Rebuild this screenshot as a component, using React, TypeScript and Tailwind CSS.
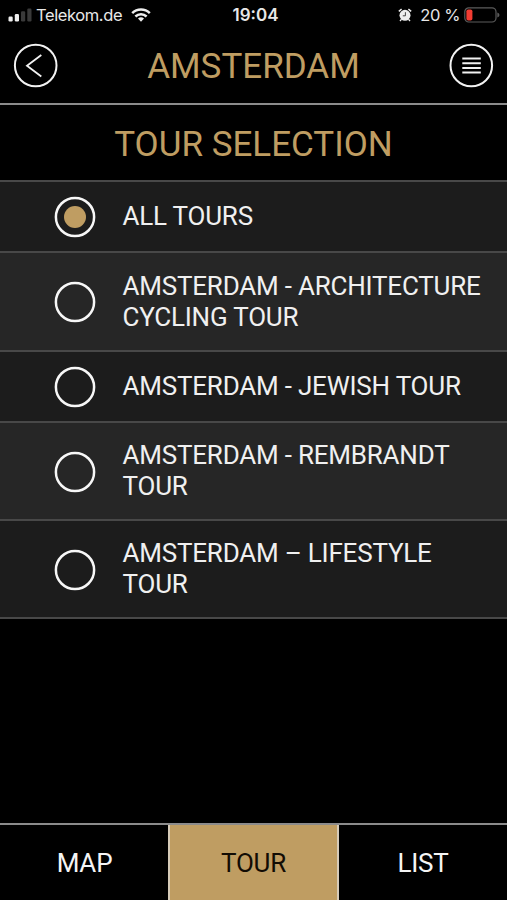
import React from "react";

const tours = [
  { lines: ["ALL TOURS"], row: "h-[71px] bg-[#1c1c1c]", selected: true },
  { lines: ["AMSTERDAM - ARCHITECTURE", "CYCLING TOUR"], row: "h-[99px] bg-[#262626]" },
  { lines: ["AMSTERDAM - JEWISH TOUR"], row: "h-[71px] bg-[#1c1c1c]" },
  { lines: ["AMSTERDAM - REMBRANDT", "TOUR"], row: "h-[98px] bg-[#262626]" },
  { lines: ["AMSTERDAM – LIFESTYLE", "TOUR"], row: "h-[98px] bg-[#1c1c1c]" },
];

function Signal() {
  return (
    <svg width="24" height="14" viewBox="0 0 24 14" fill="#eee">
      <rect x="0.5" y="8.5" width="4.2" height="5" rx="1.2" />
      <rect x="6.8" y="6" width="4.2" height="7.5" rx="1.2" />
      <rect x="13" y="3.3" width="4.2" height="10.2" rx="1.2" fill="#3a3a3a" />
      <rect x="19.3" y="0.5" width="4.2" height="13" rx="1.2" fill="#3a3a3a" />
    </svg>
  );
}

function Wifi() {
  return (
    <svg width="20" height="14" viewBox="0 0 20 14" fill="none" stroke="#eee" strokeWidth="2.5">
      <path d="M1.2 5.1a12.6 12.6 0 0 1 17.6 0" />
      <path d="M4.4 8.5a8 8 0 0 1 11.2 0" />
      <path d="M10 13.7l-3-3.1a4.3 4.3 0 0 1 6 0z" fill="#eee" stroke="none" />
    </svg>
  );
}

function Alarm() {
  return (
    <svg width="14" height="14" viewBox="0 0 14 14" fill="none">
      <circle cx="7" cy="7.3" r="5.5" fill="#eee" />
      <path d="M0.8 3.4L3.6 1.1M13.2 3.4L10.4 1.1M3.4 11.4L2 13M10.6 11.4L12 13" stroke="#eee" strokeWidth="1.4" />
      <path d="M7.4 4.2v3.6H4.8" stroke="#333" strokeWidth="0.9" />
    </svg>
  );
}

function Battery() {
  return (
    <svg width="36" height="16" viewBox="0 0 36 16" fill="none">
      <rect x="0.8" y="0.8" width="31.2" height="14.2" rx="4" stroke="#5c5c5c" strokeWidth="1.2" />
      <rect x="2.4" y="2.5" width="6" height="11" rx="1.8" fill="#f23c32" />
      <path d="M33.3 5.4q2.2.6 2.2 2.5t-2.2 2.5z" fill="#5c5c5c" />
    </svg>
  );
}

function Radio({ selected }: { selected?: boolean }) {
  return (
    <svg className="mt-px shrink-0" width="42" height="42" viewBox="0 0 42 42" fill="none">
      <circle cx="21" cy="21" r="19.1" stroke="#f7f7f7" strokeWidth="2.5" />
      {selected && <circle cx="21" cy="21" r="11" fill="#bf9d62" />}
    </svg>
  );
}

export default function App() {
  return (
    <div className="flex h-[900px] w-[507px] flex-col overflow-hidden bg-black font-['Roboto',sans-serif]">
      <div className="grid h-[29px] grid-cols-[1fr_auto_1fr] items-center text-[#e8e8e8] font-['Inter',sans-serif]">
        <div className="flex items-center pl-2">
          <Signal />
          <span className="ml-1 w-[87px] whitespace-nowrap text-[16.5px] leading-7 tracking-[-0.4px]">Telekom.de</span>
          <span className="ml-2"><Wifi /></span>
        </div>
        <div className="pl-1 text-[17px] font-semibold leading-7">19:04</div>
        <div className="flex items-center justify-end pr-[7px]">
          <Alarm />
          <span className="mx-1 ml-2 whitespace-nowrap text-[16.5px] leading-7 tracking-[-0.4px]">20 %</span>
          <Battery />
        </div>
      </div>

      <header className="flex h-[76px] items-start justify-between border-b-2 border-[#8b8b8b] px-[13px] pt-[14px]">
        <button aria-label="Back">
          <svg width="45" height="45" viewBox="0 0 45 45" fill="none" stroke="#f2f2f2">
            <circle cx="22.7" cy="22.5" r="20.8" strokeWidth="2" />
            <path d="M28.3 12L14 22.8L28.3 33.5" strokeWidth="1.8" />
          </svg>
        </button>
        <h1 className="text-[35px] leading-[47px] text-[#bf9d62]">AMSTERDAM</h1>
        <button aria-label="Menu">
          <svg width="45" height="45" viewBox="0 0 45 45" fill="none" stroke="#f2f2f2">
            <circle cx="22.3" cy="22.5" r="20.8" strokeWidth="2" />
            <path d="M13.3 15.5h18.5M13.3 20.2h18.5M13.3 24.9h18.5M13.3 29.6h18.5" strokeWidth="2" />
          </svg>
        </button>
      </header>

      <h2 className="h-[75px] text-center text-[35px] leading-[80px] text-[#bf9d62]">TOUR SELECTION</h2>

      <ul className="border-b-2 border-[#484848] text-[26px] leading-[31px] tracking-[-0.21px] text-[#f0f0f0]">
        {tours.map((tour) => (
          <li key={tour.lines.join(" ")} className={`flex items-center border-t-2 border-[#484848] pl-[54px] ${tour.row}`}>
            <Radio selected={tour.selected} />
            <span className="ml-[26.5px] whitespace-nowrap">
              {tour.lines.map((line) => (
                <span key={line} className="block">{line}</span>
              ))}
            </span>
          </li>
        ))}
      </ul>

      <nav className="mt-auto grid h-[77px] grid-cols-[168px_171px_168px] border-t-2 border-[#8b8b8b] text-center text-[26px] leading-[76px] tracking-[-0.2px] text-[#f5f5f5]">
        <div className="pl-px">MAP</div>
        <div className="border-x-2 border-[#d6cbb8] bg-[#bf9d62] text-[#120c04]">TOUR</div>
        <div>LIST</div>
      </nav>
    </div>
  );
}
